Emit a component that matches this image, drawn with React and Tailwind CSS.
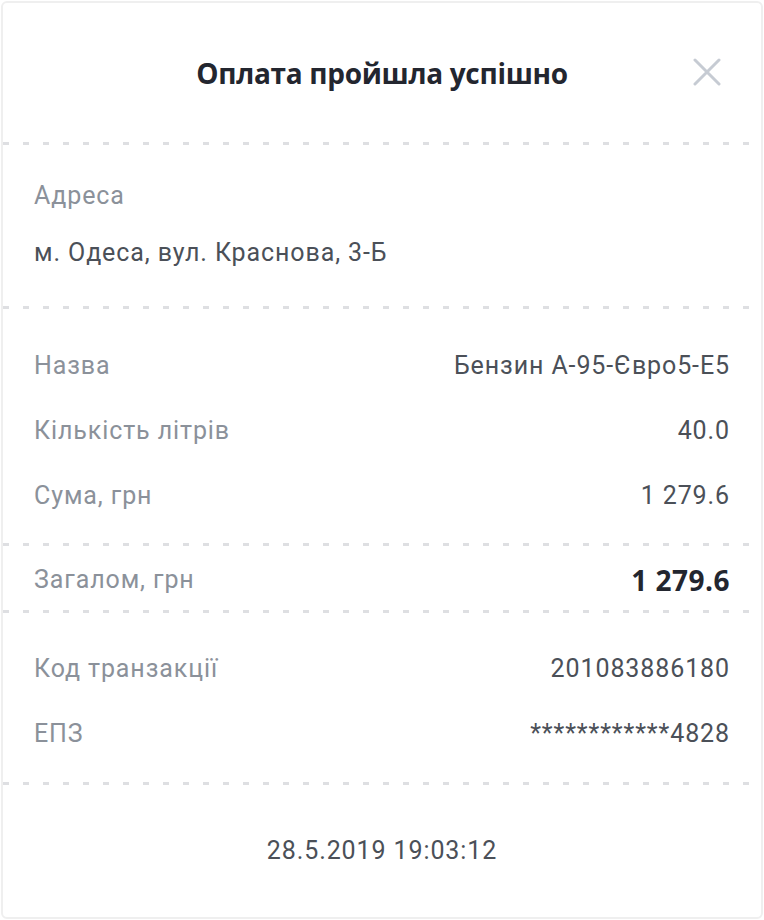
import React from 'react';

const rows1 = [
    { label: 'Назва', value: 'Бензин А-95-Євро5-Е5' },
    { label: 'Кількість літрів', value: '40.0' },
    { label: 'Сума, грн', value: '1 279.6' },
];

const rows2 = [
    { label: 'Код транзакції', value: '201083886180' },
    { label: 'ЕПЗ', value: '************4828' },
];

const Divider = () => (
    <div className="h-[3px] w-full bg-[repeating-linear-gradient(90deg,#dedfe2_0px,#dedfe2_6px,transparent_6px,transparent_20px)]" />
);

const Row = ({ label, value }) => (
    <div className="flex items-center justify-between h-[65px]">
        <span className="text-[#8b919a]">{label}</span>
        <span className="text-[#4b5058]">{value}</span>
    </div>
);

const App = () => {
    return (
        <div className="w-[764px] h-[920px] p-px bg-white font-['Roboto',sans-serif] text-[25px] tracking-[0.9px]">
            <div className="h-full flex flex-col border-2 border-[#efefef] rounded-[6px] bg-white">
                <div className="relative h-[139px] flex items-center justify-center">
                    <h1 className="font-['Open_Sans',sans-serif] font-bold text-[28px] text-[#23262f] tracking-[-0.3px]">
                        Оплата пройшла успішно
                    </h1>
                    <button className="absolute right-[38px] top-[53px] w-[32px] h-[32px] flex items-center justify-center">
                        <svg width="28" height="28" viewBox="0 0 28 28" fill="none">
                            <path d="M2 2L26 26M26 2L2 26" stroke="#c6cbd3" strokeWidth="3" strokeLinecap="round" />
                        </svg>
                    </button>
                </div>
                <Divider />

                <div className="h-[161px] px-[31px] pt-[36px]">
                    <div className="text-[#8b919a] leading-[30px]">Адреса</div>
                    <div className="text-[#4b5058] leading-[30px] mt-[27px]">м. Одеса, вул. Краснова, 3-Б</div>
                </div>
                <Divider />

                <div className="h-[234px] px-[31px] pt-[24px]">
                    {rows1.map((row) => (
                        <Row key={row.label} {...row} />
                    ))}
                </div>
                <Divider />

                <div className="h-[64px] px-[31px] flex items-center justify-between pt-[4px]">
                    <span className="text-[#8b919a]">Загалом, грн</span>
                    <span className="font-['Open_Sans',sans-serif] font-bold text-[28px] tracking-[0.5px] text-[#23262f]">1 279.6</span>
                </div>
                <Divider />

                <div className="h-[169px] px-[31px] pt-[23px]">
                    {rows2.map((row) => (
                        <Row key={row.label} {...row} />
                    ))}
                </div>
                <Divider />

                <div className="flex-1 flex items-center justify-center text-[#4b5058]">
                    28.5.2019 19:03:12
                </div>
            </div>
        </div>
    );
};

export default App;
